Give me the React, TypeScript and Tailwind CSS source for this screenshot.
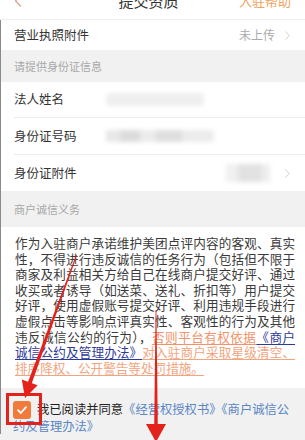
import { ChevronLeft, ChevronRight } from 'lucide-react';

const CJK = "font-['Noto_Sans_CJK_SC','Liberation_Sans',sans-serif]";

function Row({ label, children, last }: { label: string; children?: React.ReactNode; last?: boolean }) {
  return (
    <div className="h-full bg-white pl-[13px]">
      <div className={`flex items-center h-full pr-[10px] ${last ? '' : 'border-b border-[#ececec]'}`}>
        <span className="text-[12.5px] text-[#333] w-[92px] shrink-0">{label}</span>
        <div className="flex-1 flex items-center">{children}</div>
      </div>
    </div>
  );
}

function Section({ title, h }: { title: string; h: string }) {
  return (
    <div className={`bg-[#f1f1f1] flex items-center px-[13px] text-[11px] text-[#a8a8a8] ${h}`}>{title}</div>
  );
}

// each line of the paragraph spread over the full width
function Line({ children, last }: { children: React.ReactNode; last?: boolean }) {
  return (
    <div className={`w-[280px] whitespace-nowrap ${last ? '' : '[text-align-last:justify]'}`}>{children}</div>
  );
}

const orange1 = 'text-[#f2926a] underline underline-offset-2';
const blue = 'text-[#2e3a98] underline underline-offset-2';
const orange2 = 'text-[#f2a47e] underline underline-offset-2';

export default function App() {
  return (
    <div className={`relative w-[305px] h-[440px] overflow-hidden bg-[#f1f1f1] ${CJK}`}>
      {/* Header (cut off at top) */}
      <div className="h-[20px] bg-white overflow-hidden border-b border-[#eeeeee]">
        <div className="-mt-[11px] h-[24px] flex items-center px-[8px]">
          <ChevronLeft size={20} strokeWidth={1.5} className="text-[#dba48e]" />
          <span className="flex-1 text-center text-[15px] text-[#333] pl-[30px]">提交资质</span>
          <span className="text-[13px] text-[#f3a25c] pr-[6px]">入驻帮助</span>
        </div>
      </div>

      <div className="border-l border-[#8a8a8a]">
        <div className="h-[30px]">
          <Row label="营业执照附件" last>
            <span className="ml-auto text-[12px] text-[#aaa]">未上传</span>
            <ChevronRight size={15} strokeWidth={1.3} className="text-[#c4c4c4] ml-[5px]" />
          </Row>
        </div>

        <Section title="请提供身份证信息" h="h-[32px]" />

        <div className="h-[36px]">
          <Row label="法人姓名">
            <div className="w-[98px] h-[13px] rounded bg-[#efefef] blur-[2px]" />
          </Row>
        </div>
        <div className="h-[37px]">
          <Row label="身份证号码">
            <div className="flex items-center blur-[2px]">
              <div className="w-[14px] h-[12px] bg-[#e8e8e8]" />
              <div className="w-[20px] h-[12px] bg-[#dcdcdc]" />
              <div className="w-[16px] h-[12px] bg-[#ebebeb]" />
              <div className="w-[26px] h-[12px] bg-[#dedede]" />
              <div className="w-[32px] h-[12px] bg-[#ececec]" />
            </div>
          </Row>
        </div>
        <div className="h-[36px]">
          <Row label="身份证附件" last>
            <div className="ml-auto flex items-center blur-[2px]">
              <div className="w-[12px] h-[18px] bg-[#f0f0f0]" />
              <div className="w-[24px] h-[18px] bg-[#e2e2e2]" />
              <div className="w-[8px] h-[18px] bg-[#eeeeee]" />
            </div>
            <ChevronRight size={15} strokeWidth={1.3} className="text-[#c4c4c4] ml-[10px]" />
          </Row>
        </div>

        <Section title="商户诚信义务" h="h-[36px]" />

        <div className="bg-white pl-[14px] pr-[10px] pt-[8px] pb-[13px]">
          <div className="text-[12.6px] leading-[15.6px] text-[#3a3a3a]">
            <Line>作为入驻商户承诺维护美团点评内容的客观、真实</Line>
            <Line>性，不得进行违反诚信的任务行为（包括但不限于</Line>
            <Line>商家及利益相关方给自己在线商户提交好评、通过</Line>
            <Line>收买或者诱导（如送菜、送礼、折扣等）用户提交</Line>
            <Line>好评，使用虚假账号提交好评、利用违规手段进行</Line>
            <Line>虚假点击等影响点评真实性、客观性的行为及其他</Line>
            <Line>
              违反诚信公约的行为），<span className={orange1}>否则平台有权依据</span><span className={blue}>《商户</span>
            </Line>
            <Line>
              <span className={blue}>诚信公约及管理办法》</span><span className={orange2}>对入驻商户采取星级清空、</span>
            </Line>
            <Line last>
              <span className={orange2}>排序降权、公开警告等处罚措施。</span>
            </Line>
          </div>
        </div>

        <div className="pl-[12px] pr-[9px] pt-[14px]">
          <p className="text-[12.3px] leading-[15px] text-[#222]">
            <span className="inline-flex items-center justify-center w-[18px] h-[18px] rounded-[3px] bg-[#f07b3c] align-middle mr-[6px] -mt-[3px]">
              <svg width="12" height="12" viewBox="0 0 12 12" fill="none">
                <path d="M2 6.2 L4.8 9 L10 3.2" stroke="white" strokeWidth="1.8" strokeLinecap="round" strokeLinejoin="round" />
              </svg>
            </span>
            我已阅读并同意
            <span className="text-[#5a86c6]">《经营权授权书》《商户诚信公约及管理办法》</span>
          </p>
        </div>
      </div>

      {/* annotation overlay */}
      <div className="absolute left-[6px] top-[393px] w-[36px] h-[32px] border-[3px] border-[#e3231b]" />
      <svg className="absolute inset-0 pointer-events-none" width="305" height="440" viewBox="0 0 305 440">
        <polygon points="76,255 77,255.4 31.5,384 27.8,382.6" fill="#e3231b" />
        <polygon points="25,398 21.8,379.5 37.6,385.2" fill="#e3231b" />
        <polygon points="155.6,310 156.4,310 157.8,426 154.2,426" fill="#e3231b" />
        <polygon points="146,424 166,424 156,442" fill="#e3231b" />
      </svg>
    </div>
  );
}
